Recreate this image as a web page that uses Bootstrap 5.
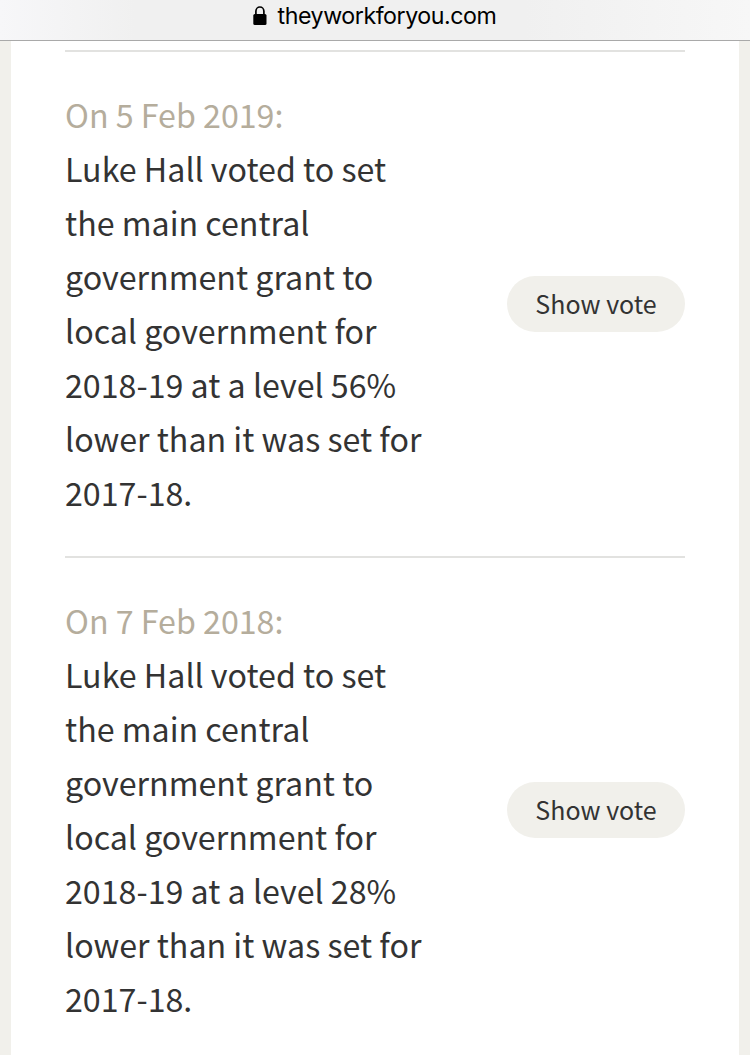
<!DOCTYPE html>
<html lang="en">
<head>
<meta charset="utf-8">
<meta name="viewport" content="width=device-width, initial-scale=1">
<title>TheyWorkForYou</title>
<link rel="stylesheet" href="https://cdn.jsdelivr.net/npm/bootstrap@5.3.0/dist/css/bootstrap.min.css">
<style>
body{background:#f1f0eb;color:#333;font-family:"Noto Sans CJK SC",sans-serif;overflow:hidden;height:1055px}
.urlbar{height:41px;background:linear-gradient(90deg,#f7f7f9,#f0f0f0 18%,#f0f0f0 70%,#f7f7f7);border-bottom:1px solid #a9a9a9;font:23.2px/32px Inter,sans-serif;color:#000;gap:11px;padding-right:1px}
.urlbar span{letter-spacing:-.45px}
.urlbar svg{margin-top:6px}
.panel{margin:0 11px;padding:9px 54px 0;height:1014px}
.vote{border-top:2px solid #e2e2e0;height:506px;padding:35px 0 37px}
.vote p{width:380px;font-size:32.2px;line-height:54px}
.vote .date{color:#b5ad9c}
.pill{width:178px;height:56px;background:#f1f0eb;color:#333;font-size:25px;line-height:55px;margin-top:2px}
.pill:hover{background:#e8e6dc}
</style>
</head>
<body>
<header class="urlbar d-flex justify-content-center">
<svg class="flex-shrink-0" width="14" height="20" viewBox="0 0 14 20"><rect x=".3" y="8" width="13.2" height="11" rx="1.5"/><path d="M2.9 9V5.2a4 4.2 0 0 1 8 0V9" fill="none" stroke="#000" stroke-width="1.7"/></svg>
<span>theyworkforyou.com</span>
</header>
<main class="panel bg-white overflow-hidden">
<article class="vote d-flex justify-content-between">
<p class="mb-0"><span class="date">On 5 Feb 2019:</span><br>Luke Hall voted to set<br>the main central<br>government grant to<br>local government for<br>2018-19 at a level 56%<br>lower than it was set for<br>2017-18.</p>
<a class="pill btn rounded-pill border-0 p-0 align-self-center" href="#">Show vote</a>
</article>
<article class="vote d-flex justify-content-between">
<p class="mb-0"><span class="date">On 7 Feb 2018:</span><br>Luke Hall voted to set<br>the main central<br>government grant to<br>local government for<br>2018-19 at a level 28%<br>lower than it was set for<br>2017-18.</p>
<a class="pill btn rounded-pill border-0 p-0 align-self-center" href="#">Show vote</a>
</article>
</main>
<script src="https://cdn.jsdelivr.net/npm/bootstrap@5.3.0/dist/js/bootstrap.bundle.min.js"></script>
</body>
</html>
